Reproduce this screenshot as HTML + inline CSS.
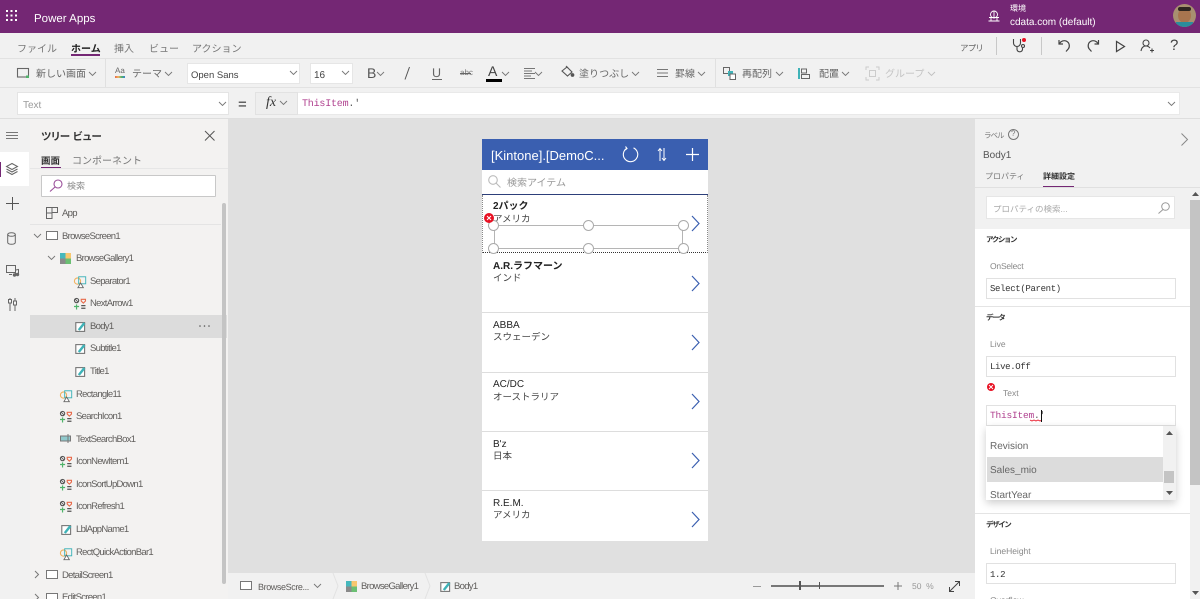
<!DOCTYPE html>
<html><head><meta charset="utf-8">
<style>
html,body{margin:0;padding:0;width:1200px;height:599px;overflow:hidden;background:#e0e0e0}
body{position:relative;font-family:"Liberation Sans","Noto Sans CJK JP",sans-serif;color:#555;text-rendering:geometricPrecision}
div{position:absolute;box-sizing:border-box}
.t{white-space:nowrap;line-height:20px;height:20px;font-size:10px;color:#605e5c;margin-top:1px}
.tr{font-size:9.500px;letter-spacing:-.7px}
.m{font-family:"Liberation Mono","Noto Sans CJK JP",monospace;font-size:9px;letter-spacing:-.34px}
.f{font-family:"Liberation Mono","Noto Sans CJK JP",monospace;font-size:10px;letter-spacing:-.2px}
.sec{font-size:7.500px;letter-spacing:-1.400px;color:#333;font-weight:bold}
svg{position:absolute;overflow:visible}
.b{background:#fff;border:1px solid #e1e1e1}
.h{width:11px;height:11px;border-radius:50%;background:#fff;border:1px solid #aaa}
.sep{height:1px;background:#e4e4e4}
</style></head><body>
<svg width="0" height="0" style="position:absolute"><defs>
<g id="lab" transform="scale(.8)"><rect x="1" y="2" width="11" height="11" fill="#fff" stroke="#777" stroke-width="1.400"/><path d="M3.500 10.500L10.500 1.500l2.500 2L6 12z" fill="#3fb3b8"/></g>
<g id="ico" transform="scale(.85)"><circle cx="3" cy="3" r="2.500" fill="none" stroke="#555" stroke-width="1.300"/><path d="M1.500 1.500l3 3" stroke="#555"/><path d="M8.500 1.500h5v2l-2.500 2.500-2.500-2.500z" fill="none" stroke="#e8694a" stroke-width="1.300"/><path d="M0 10h6M3 7.500v6" stroke="#4fb36a" stroke-width="1.400"/><path d="M8.500 9h5M8.500 12h5" stroke="#555" stroke-width="1.500"/></g>
<g id="shp" transform="scale(.78)"><circle cx="4.500" cy="6.500" r="4" fill="none" stroke="#f0b260" stroke-width="1.400"/><rect x="6" y="1" width="9" height="9" fill="none" stroke="#3fb3b8" stroke-width="1.200"/><path d="M5 15l3.500-6 3.500 6z" fill="#fff" stroke="#666" stroke-width="1.100"/></g>
<g id="scr"><rect x=".5" y=".5" width="11" height="8" fill="#fff" stroke="#777" stroke-width="1"/></g>
<g id="gal"><rect x="0" y="0" width="5.500" height="5.500" fill="#45b8bd"/><rect x="5.500" y="0" width="5.500" height="5.500" fill="#f8c76f"/><rect x="0" y="5.500" width="5.500" height="5.500" fill="#8a8a8a"/><rect x="5.500" y="5.500" width="5.500" height="5.500" fill="#6bbf73"/></g>
<path id="chev" d="M0 0l3.500 3.500L7 0" fill="none" stroke="#777" stroke-width=".9"/>
<path id="arr" d="M0 0l7 7.500-7 7.500" fill="none" stroke="#3a5fb0" stroke-width="1.200"/>
</defs></svg>

<!-- top bar -->
<div style="left:0;top:0;width:1200px;height:33px;background:#742774"></div>
<svg style="left:6px;top:10px" width="12" height="12" fill="#fff"><rect width="2" height="2"/><rect x="4.500" width="2" height="2"/><rect x="9" width="2" height="2"/><rect y="4.500" width="2" height="2"/><rect x="4.500" y="4.500" width="2" height="2"/><rect x="9" y="4.500" width="2" height="2"/><rect y="9" width="2" height="2"/><rect x="4.500" y="9" width="2" height="2"/><rect x="9" y="9" width="2" height="2"/></svg>
<div class="t" style="left:34px;top:8px;color:#fff;font-size:11.500px">Power Apps</div>
<svg style="left:988px;top:10px" width="12" height="12" fill="none" stroke="#fff" stroke-width=".9"><circle cx="6" cy="4.500" r="3.500"/><path d="M1 7.500h10M0.500 11h11M3 8v3M9 8v3M6 1v6"/></svg>
<div class="t" style="left:1010px;top:-2px;color:#fff;font-size:8px">環境</div>
<div class="t" style="left:1010px;top:12px;color:#fff;font-size:10px">cdata.com (default)</div>
<div style="left:1173px;top:4px;width:23px;height:23px;border-radius:50%;background:#a89070;overflow:hidden"><div style="left:5px;top:4px;width:13px;height:15px;border-radius:50%;background:#a8754f"></div><div style="left:5px;top:3px;width:13px;height:4px;border-radius:6px;background:#2e2620"></div><div style="left:3px;top:18px;width:17px;height:6px;background:#2b8e9c"></div></div>

<!-- menu row -->
<div style="left:0;top:33px;width:1200px;height:26px;background:#f1f1f1;border-bottom:1px solid #e2e2e2"></div>
<div class="t" style="left:17px;top:39px;color:#777">ファイル</div>
<div class="t" style="left:71px;top:39px;color:#222;font-weight:bold">ホーム</div>
<div style="left:71px;top:54px;width:29px;height:2px;background:#742774"></div>
<div class="t" style="left:114px;top:39px;color:#777">挿入</div>
<div class="t" style="left:149px;top:39px;color:#777">ビュー</div>
<div class="t" style="left:192px;top:39px;color:#777">アクション</div>
<div class="t" style="left:960px;top:37px;font-size:8.500px;letter-spacing:-.8px;color:#666">アプリ</div>
<div style="left:996px;top:37px;width:1px;height:18px;background:#c8c8c8"></div>
<div style="left:1041px;top:37px;width:1px;height:18px;background:#c8c8c8"></div>
<svg style="left:1012px;top:38px" width="16" height="16" fill="none" stroke="#444" stroke-width="1.100"><path d="M1.500 1v4a3.500 3.500 0 0 0 7 0V1M5 9v2.500a2.800 2.800 0 0 0 5.500 0V10"/><circle cx="11" cy="8" r="1.500"/><circle cx="12" cy="2" r="2" fill="#e81123" stroke="none"/></svg>
<svg style="left:1058px;top:38px" width="14" height="15" fill="none" stroke="#444" stroke-width="1.200"><path d="M1 2v4h4M1.500 5.500C3 3 6 2 8.500 3.200c3 1.500 3.500 5 2 7.500L8 13.500"/></svg>
<svg style="left:1086px;top:38px" width="14" height="15" fill="none" stroke="#444" stroke-width="1.200"><path d="M12.500 2v4h-4M12 5.500C10.500 3 7.500 2 5 3.200c-3 1.500-3.500 5-2 7.500l2.500 2.800"/></svg>
<svg style="left:1115px;top:40px" width="12" height="13" fill="none" stroke="#444" stroke-width="1.200"><path d="M1.500 1.500v10l8-5z"/></svg>
<svg style="left:1140px;top:39px" width="15" height="14" fill="none" stroke="#444" stroke-width="1.100"><circle cx="6" cy="4" r="3"/><path d="M1 12c.5-3 2-5 5-5 2 0 3 .8 4 2M10 11.500h4M12 9.500v4"/></svg>
<div class="t" style="left:1170px;top:35px;font-size:15px;color:#444">?</div>

<!-- toolbar -->
<div style="left:0;top:59px;width:1200px;height:29px;background:#f1f1f1;border-bottom:1px solid #e2e2e2"></div>
<div style="left:105px;top:59px;width:1px;height:28px;background:#e0e0e0"></div>
<div style="left:715px;top:59px;width:1px;height:28px;background:#e0e0e0"></div>
<svg style="left:17px;top:68px" width="13" height="11" fill="none"><rect x=".5" y=".5" width="11" height="8.500" stroke="#666" stroke-width="1.100"/><rect x="9" y="7.500" width="3" height="2.500" fill="#4fb36a"/></svg>
<div class="t" style="left:36px;top:64px;color:#666">新しい画面</div>
<svg style="left:89px;top:72px" width="8" height="5"><use href="#chev"/></svg>
<div class="t" style="left:115px;top:60px;font-size:8px;color:#666">Aa</div>
<div style="left:115px;top:76px;width:10px;height:2px;background:linear-gradient(90deg,#e8694a,#f0b260,#4fb36a,#3a7fd0)"></div>
<div class="t" style="left:132px;top:64px;color:#666">テーマ</div>
<svg style="left:165px;top:72px" width="8" height="5"><use href="#chev"/></svg>
<div style="left:187px;top:63px;width:113px;height:21px;background:#fff;border:1px solid #e6e6e6"></div>
<div class="t" style="left:191px;top:65px;font-size:9.500px;color:#444">Open Sans</div>
<svg style="left:290px;top:71px" width="8" height="5"><use href="#chev"/></svg>
<div style="left:310px;top:63px;width:43px;height:21px;background:#fff;border:1px solid #e6e6e6"></div>
<div class="t" style="left:314px;top:65px;font-size:10px;color:#444">16</div>
<svg style="left:342px;top:71px" width="8" height="5"><use href="#chev"/></svg>
<div class="t" style="left:367px;top:62px;font-size:14px;color:#555">B</div>
<svg style="left:377px;top:72px" width="8" height="5"><use href="#chev"/></svg>
<svg style="left:404px;top:67px" width="7" height="13" stroke="#555" stroke-width="1"><path d="M5.500 0L1 12.500"/></svg>
<div class="t" style="left:432px;top:62px;font-size:12.500px;color:#666">U</div>
<div style="left:432px;top:79px;width:10px;height:1px;background:#666"></div>
<div class="t" style="left:460px;top:62px;font-size:8px;color:#777">abc</div>
<div style="left:460px;top:73px;width:11px;height:1px;background:#666"></div>
<div class="t" style="left:488px;top:60px;font-size:14px;color:#444">A</div>
<div style="left:486px;top:79px;width:16px;height:3px;background:#000"></div>
<svg style="left:502px;top:72px" width="8" height="5"><use href="#chev"/></svg>
<svg style="left:524px;top:68px" width="12" height="11" stroke="#777" stroke-width="1"><path d="M0 .5h11M0 3h8M0 5.500h11M0 8h7M0 10.500h11"/></svg>
<svg style="left:535px;top:72px" width="8" height="5"><use href="#chev"/></svg>
<svg style="left:561px;top:65px" width="13" height="13" fill="none" stroke="#555" stroke-width="1.100"><path d="M1 6l5-4 5 5-4.500 4z"/><path d="M5 1l2 2" /><circle cx="11.500" cy="10" r="1.300" fill="#555"/></svg>
<div class="t" style="left:579px;top:64px;color:#666">塗りつぶし</div>
<svg style="left:632px;top:72px" width="8" height="5"><use href="#chev"/></svg>
<svg style="left:657px;top:69px" width="11" height="9" stroke="#777" stroke-width="1"><path d="M0 .5h11M0 4h11M0 7.500h11"/></svg>
<div class="t" style="left:675px;top:64px;color:#666">罫線</div>
<svg style="left:698px;top:72px" width="8" height="5"><use href="#chev"/></svg>
<svg style="left:723px;top:67px" width="13" height="13" fill="none"><rect x=".5" y=".5" width="6" height="6" stroke="#666"/><rect x="5" y="4" width="5" height="5" fill="#3fb3b8"/><rect x="7" y="7" width="5.500" height="5.500" fill="#fff" stroke="#666"/></svg>
<div class="t" style="left:742px;top:64px;color:#666">再配列</div>
<svg style="left:776px;top:72px" width="8" height="5"><use href="#chev"/></svg>
<svg style="left:798px;top:67px" width="13" height="13" fill="none"><rect x="0" y="1" width="2" height="11" fill="#3fb3b8"/><rect x="3.500" y="2" width="5" height="4" stroke="#666"/><rect x="3.500" y="7.500" width="8" height="4" stroke="#666"/></svg>
<div class="t" style="left:819px;top:64px;color:#666">配置</div>
<svg style="left:842px;top:72px" width="8" height="5"><use href="#chev"/></svg>
<svg style="left:866px;top:67px" width="13" height="13" fill="none" stroke="#ccc" stroke-width="1"><path d="M0 3V0h3M10 0h3v3M13 10v3h-3M3 13H0v-3"/><rect x="3.500" y="3.500" width="6" height="6"/></svg>
<div class="t" style="left:885px;top:64px;color:#c4c4c4">グループ</div>
<svg style="left:928px;top:72px" width="8" height="5"><use href="#chev" style="opacity:.4"/></svg>

<!-- formula row -->
<div style="left:0;top:88px;width:1200px;height:31px;background:#f1f1f1;border-bottom:1px solid #dedede"></div>
<div style="left:17px;top:92px;width:212px;height:23px;background:#fff;border:1px solid #e4e4e4"></div>
<div class="t" style="left:23px;top:95px;font-size:10px;color:#999">Text</div>
<svg style="left:219px;top:102px" width="8" height="5"><use href="#chev"/></svg>
<div class="t" style="left:238px;top:94px;font-size:15px;color:#333">=</div>
<div style="left:255px;top:92px;width:43px;height:23px;background:#eee;border:1px solid #e2e2e2"></div>
<div class="t" style="left:266px;top:92px;font-size:14px;color:#333;font-family:'Liberation Serif',serif;font-style:italic">fx</div>
<svg style="left:280px;top:101px" width="8" height="5"><use href="#chev"/></svg>
<div style="left:298px;top:92px;width:882px;height:23px;background:#fff;border:1px solid #e9e9e9;border-left:0"></div>
<div class="t f" style="left:302px;top:94px;color:#b0418f">ThisItem<span style="color:#555">.'</span></div>
<svg style="left:1168px;top:102px" width="8" height="5"><use href="#chev"/></svg>

<!-- left rail -->
<div style="left:0;top:119px;width:30px;height:480px;background:#f1f1f1"></div>
<svg style="left:6px;top:132px" width="12" height="8" stroke="#777" stroke-width="1"><path d="M0 .5h12M0 3.500h12M0 6.500h12"/></svg>
<div style="left:0;top:152px;width:29px;height:34px;background:#fff"></div>
<div style="left:0;top:162px;width:1px;height:15px;background:#742774"></div>
<svg style="left:6px;top:163px" width="12" height="13" fill="none" stroke="#666" stroke-width="1"><path d="M6 .5l5.500 3L6 6.500.5 3.500zM.5 6L6 9l5.500-3M.5 8.500l5.500 3 5.500-3"/></svg>
<svg style="left:6px;top:197px" width="13" height="13" stroke="#555" stroke-width="1"><path d="M6.500 0v13M0 6.500h13"/></svg>
<svg style="left:7px;top:232px" width="10" height="13" fill="none" stroke="#666" stroke-width="1"><ellipse cx="4.500" cy="2.500" rx="3.800" ry="1.800"/><path d="M.7 2.500v8c0 1 1.700 1.800 3.800 1.800s3.800-.8 3.800-1.800v-8"/></svg>
<svg style="left:6px;top:265px" width="13" height="12" fill="none" stroke="#666" stroke-width="1"><rect x=".5" y=".5" width="9" height="7"/><path d="M3 9.500h3"/><circle cx="8.500" cy="10" r="1.200" fill="#666"/><circle cx="11.500" cy="9.500" r="1.200" fill="#666"/><path d="M9.500 10V5l3-.5v5"/></svg>
<svg style="left:8px;top:298px" width="9" height="14" fill="none" stroke="#666" stroke-width="1"><path d="M2 5v8M7 0v3M7 7v6M2 0v1.500"/><rect x=".5" y="1.500" width="3" height="3.500"/><rect x="5.500" y="3" width="3" height="4"/></svg>

<!-- tree panel -->
<div style="left:30px;top:119px;width:198px;height:480px;background:#f3f2f1"></div>
<div class="t" style="left:41px;top:126px;font-size:10.500px;letter-spacing:-1.100px;word-spacing:1.500px;color:#333;font-weight:bold">ツリー ビュー</div>
<svg style="left:205px;top:131px" width="10" height="10" stroke="#555" stroke-width="1"><path d="M0 0l9.500 9.500M9.500 0L0 9.500"/></svg>
<div class="t" style="left:41px;top:151px;font-size:9.500px;color:#333;font-weight:bold">画面</div>
<div class="t" style="left:72px;top:151px;font-size:10px;color:#777">コンポーネント</div>
<div style="left:41px;top:167px;width:20px;height:2px;background:#742774"></div>
<div style="left:30px;top:168px;width:198px;height:1px;background:#e6e6e6"></div>
<div style="left:41px;top:175px;width:175px;height:22px;background:#fff;border:1px solid #c8c8c8;border-radius:1px"></div>
<svg style="left:50px;top:179px" width="13" height="13" fill="none" stroke="#9a4f9a" stroke-width="1.100"><circle cx="8" cy="5" r="4"/><path d="M5 8l-5 4.500"/></svg>
<div class="t" style="left:67px;top:175px;font-size:9px;color:#888">検索</div>
<svg style="left:46px;top:207px" width="12" height="12" fill="none" stroke="#666" stroke-width="1"><path d="M.5.500h5.500v5.500H.5zM6 .5h5.500v5H6zM.5 6H6v5.500H.5z"/></svg>
<div class="t tr" style="left:62px;top:203px">App</div>
<div style="left:30px;top:224px;width:191px;height:1px;background:#e4e4e4"></div>

<svg style="left:34px;top:234px" width="8" height="5"><use href="#chev"/></svg>
<svg style="left:46px;top:231px" width="12" height="10"><use href="#scr"/></svg>
<div class="t tr" style="left:62px;top:226px">BrowseScreen1</div>
<svg style="left:48px;top:256px" width="8" height="5"><use href="#chev"/></svg>
<svg style="left:60px;top:253px" width="11" height="11"><use href="#gal"/></svg>
<div class="t tr" style="left:76px;top:248px">BrowseGallery1</div>
<svg style="left:74px;top:276px" width="12" height="12"><use href="#shp"/></svg>
<div class="t tr" style="left:90px;top:271px">Separator1</div>
<svg style="left:74px;top:298px" width="12" height="12"><use href="#ico"/></svg>
<div class="t tr" style="left:90px;top:293px">NextArrow1</div>
<div style="left:30px;top:315px;width:197px;height:23px;background:#dcdcdc"></div>
<svg style="left:75px;top:321px" width="11" height="11"><use href="#lab"/></svg>
<div class="t tr" style="left:90px;top:316px">Body1</div>
<svg style="left:199px;top:325px" width="12" height="2" fill="#555"><circle cx="1" cy="1" r=".8"/><circle cx="5.500" cy="1" r=".8"/><circle cx="10" cy="1" r=".8"/></svg>
<svg style="left:75px;top:343px" width="11" height="11"><use href="#lab"/></svg>
<div class="t tr" style="left:90px;top:338px">Subtitle1</div>
<svg style="left:75px;top:366px" width="11" height="11"><use href="#lab"/></svg>
<div class="t tr" style="left:90px;top:361px">Title1</div>
<svg style="left:60px;top:390px" width="12" height="12"><use href="#shp"/></svg>
<div class="t tr" style="left:76px;top:384px">Rectangle11</div>
<svg style="left:60px;top:411px" width="12" height="12"><use href="#ico"/></svg>
<div class="t tr" style="left:76px;top:406px">SearchIcon1</div>
<svg style="left:60px;top:434px" width="12" height="10" fill="none" stroke="#777"><rect x=".5" y="2" width="10" height="5" fill="#8fc9cc"/><path d="M8 0v9"/></svg>
<div class="t tr" style="left:76px;top:429px">TextSearchBox1</div>
<svg style="left:60px;top:456px" width="12" height="12"><use href="#ico"/></svg>
<div class="t tr" style="left:76px;top:451px">IconNewItem1</div>
<svg style="left:60px;top:479px" width="12" height="12"><use href="#ico"/></svg>
<div class="t tr" style="left:76px;top:474px">IconSortUpDown1</div>
<svg style="left:60px;top:501px" width="12" height="12"><use href="#ico"/></svg>
<div class="t tr" style="left:76px;top:496px">IconRefresh1</div>
<svg style="left:61px;top:524px" width="11" height="11"><use href="#lab"/></svg>
<div class="t tr" style="left:76px;top:519px">LblAppName1</div>
<svg style="left:60px;top:548px" width="12" height="12"><use href="#shp"/></svg>
<div class="t tr" style="left:76px;top:542px">RectQuickActionBar1</div>
<svg style="left:35px;top:571px" width="5" height="8"><path d="M0 0l3.500 3.500L0 7" fill="none" stroke="#777"/></svg>
<svg style="left:46px;top:570px" width="12" height="10"><use href="#scr"/></svg>
<div class="t tr" style="left:62px;top:565px">DetailScreen1</div>
<svg style="left:35px;top:594px" width="5" height="8"><path d="M0 0l3.500 3.500L0 7" fill="none" stroke="#777"/></svg>
<svg style="left:46px;top:593px" width="12" height="10"><use href="#scr"/></svg>
<div class="t tr" style="left:62px;top:587px">EditScreen1</div>
<div style="left:222px;top:203px;width:4px;height:381px;background:#c4c4c4;border-radius:2px"></div>

<!-- canvas -->
<div style="left:228px;top:119px;width:747px;height:454px;background:#e0e0e0"></div>
<div style="left:482px;top:139px;width:226px;height:402px;background:#fff"></div>
<div style="left:482px;top:139px;width:226px;height:31px;background:#3a5fb0"></div>
<div class="t" style="left:491px;top:145px;color:#fff;font-size:13px">[Kintone].[DemoC...</div>
<svg style="left:622px;top:146px" width="17" height="17" fill="none" stroke="#fff" stroke-width="1.100"><path d="M5 2.200a7.200 7.200 0 1 0 6.500-.3M3.500 .5L5 2.500l-2 1.500" /></svg>
<svg style="left:657px;top:148px" width="10" height="13" fill="none" stroke="#fff" stroke-width="1"><path d="M3 13V1M1 3l2-2.500L5 3M7 0v12M5 10l2 2.500L9 10"/></svg>
<svg style="left:686px;top:148px" width="13" height="13" stroke="#fff" stroke-width="1.200"><path d="M6.500 0v13M0 6.500h13"/></svg>
<svg style="left:488px;top:175px" width="13" height="13" fill="none" stroke="#bbb" stroke-width="1.100"><circle cx="5" cy="5" r="4.300"/><path d="M8 8l4.500 4.500"/></svg>
<div class="t" style="left:507px;top:173px;font-size:10px;color:#999">検索アイテム</div>
<div style="left:482px;top:194px;width:226px;height:1px;background:#2d3f7a"></div>
<div style="left:482px;top:195px;width:226px;height:58px;border-left:1px dotted #888;border-right:1px dotted #888;border-bottom:1px dotted #333"></div>

<div class="t" style="left:493px;top:196px;font-size:10px;font-weight:bold;color:#222">2パック</div>
<div class="t" style="left:493px;top:209px;font-size:9.500px;color:#444">アメリカ</div>
<svg style="left:692px;top:216px" width="9" height="16"><use href="#arr"/></svg>
<div style="left:494px;top:225px;width:189px;height:24px;border:1px solid #b5b5b5"></div>
<div class="h" style="left:488px;top:220px"></div><div class="h" style="left:583px;top:220px"></div><div class="h" style="left:678px;top:220px"></div>
<div class="h" style="left:488px;top:243px"></div><div class="h" style="left:583px;top:243px"></div><div class="h" style="left:678px;top:243px"></div>
<div style="left:484px;top:213px;width:10px;height:10px;border-radius:50%;background:#e81123"></div>
<svg style="left:487px;top:216px" width="4" height="4" stroke="#fff" stroke-width="1"><path d="M0 0l4 4M4 0L0 4"/></svg>

<div class="t" style="left:493px;top:256px;font-size:10px;font-weight:bold;color:#222">A.R.ラフマーン</div>
<div class="t" style="left:493px;top:268px;font-size:9.500px;color:#444">インド</div>
<svg style="left:692px;top:276px" width="9" height="16"><use href="#arr"/></svg>
<div style="left:482px;top:312px;width:226px;height:1px;background:#ddd"></div>
<div class="t" style="left:493px;top:315px;font-size:10px;color:#222">ABBA</div>
<div class="t" style="left:493px;top:327px;font-size:9.500px;color:#444">スウェーデン</div>
<svg style="left:692px;top:335px" width="9" height="16"><use href="#arr"/></svg>
<div style="left:482px;top:372px;width:226px;height:1px;background:#ddd"></div>
<div class="t" style="left:493px;top:374px;font-size:10px;color:#222">AC/DC</div>
<div class="t" style="left:493px;top:387px;font-size:9.500px;color:#444">オーストラリア</div>
<svg style="left:692px;top:394px" width="9" height="16"><use href="#arr"/></svg>
<div style="left:482px;top:431px;width:226px;height:1px;background:#ddd"></div>
<div class="t" style="left:493px;top:434px;font-size:10px;color:#222">B'z</div>
<div class="t" style="left:493px;top:446px;font-size:9.500px;color:#444">日本</div>
<svg style="left:692px;top:453px" width="9" height="16"><use href="#arr"/></svg>
<div style="left:482px;top:490px;width:226px;height:1px;background:#ddd"></div>
<div class="t" style="left:493px;top:493px;font-size:10px;color:#222">R.E.M.</div>
<div class="t" style="left:493px;top:505px;font-size:9.500px;color:#444">アメリカ</div>
<svg style="left:692px;top:512px" width="9" height="16"><use href="#arr"/></svg>

<!-- bottom bar -->
<div style="left:228px;top:573px;width:747px;height:26px;background:#f1f1f1"></div>
<svg style="left:240px;top:581px" width="12" height="10"><use href="#scr"/></svg>
<div class="t" style="left:258px;top:576px;font-size:9px;letter-spacing:-.4px">BrowseScre...</div>
<svg style="left:314px;top:584px" width="8" height="5"><use href="#chev"/></svg>
<svg style="left:333px;top:573px" width="6" height="26" fill="none" stroke="#e2e2e2"><path d="M0 0l5 13-5 13"/></svg>
<svg style="left:346px;top:581px" width="11" height="11"><use href="#gal"/></svg>
<div class="t tr" style="left:361px;top:576px">BrowseGallery1</div>
<svg style="left:425px;top:573px" width="6" height="26" fill="none" stroke="#e2e2e2"><path d="M0 0l5 13-5 13"/></svg>
<svg style="left:440px;top:581px" width="11" height="11"><use href="#lab"/></svg>
<div class="t tr" style="left:454px;top:576px">Body1</div>
<div style="left:753px;top:586px;width:8px;height:1px;background:#999"></div>
<div style="left:771px;top:585px;width:113px;height:2px;background:#777"></div>
<div style="left:799px;top:581px;width:2px;height:9px;background:#555"></div>
<div style="left:819px;top:582px;width:1px;height:7px;background:#555"></div>
<svg style="left:894px;top:582px" width="8" height="8" stroke="#777"><path d="M4 0v8M0 4h8"/></svg>
<div class="t" style="left:912px;top:575px;font-size:8.500px;color:#999">50&nbsp; %</div>
<svg style="left:949px;top:581px" width="11" height="11" fill="none" stroke="#444" stroke-width="1"><path d="M.5 10.500l10-10M6 .5h4.500V5M.5 6v4.500H5"/></svg>

<!-- right panel -->
<div style="left:975px;top:119px;width:225px;height:480px;background:#f1f1f1"></div>
<div class="t" style="left:984px;top:125px;font-size:7.500px;letter-spacing:-1px;color:#777">ラベル</div>
<svg style="left:1008px;top:129px" width="11" height="11" fill="none" stroke="#777"><circle cx="5.500" cy="5.500" r="5"/></svg>
<div class="t" style="left:1011px;top:123px;font-size:8px;color:#777">?</div>
<svg style="left:1181px;top:133px" width="7" height="13" fill="none" stroke="#888"><path d="M.5.500l6 6-6 6"/></svg>
<div class="t" style="left:983px;top:145px;font-size:10px;color:#555">Body1</div>
<div class="t" style="left:985px;top:166px;font-size:8px;color:#777">プロパティ</div>
<div class="t" style="left:1043px;top:166px;font-size:8px;color:#333;font-weight:bold">詳細設定</div>
<div style="left:1043px;top:186px;width:31px;height:2px;background:#742774"></div>
<div style="left:975px;top:187px;width:225px;height:1px;background:#e0e0e0"></div>

<div style="left:975px;top:188px;width:215px;height:41px;background:#f1f1f1"></div>
<div style="left:975px;top:229px;width:215px;height:370px;background:#fff"></div>
<div style="left:986px;top:196px;width:189px;height:23px;background:#fff;border:1px solid #e6e6e6"></div>
<div class="t" style="left:993px;top:198px;font-size:8.500px;color:#aaa">プロパティの検索...</div>
<svg style="left:1158px;top:202px" width="12" height="12" fill="none" stroke="#999"><circle cx="7.500" cy="4.500" r="3.800"/><path d="M5 7.500L.5 11.500"/></svg>
<div class="t sec" style="left:986px;top:229px">アクション</div>
<div class="t" style="left:990px;top:255px;font-size:8.500px;letter-spacing:-.2px;color:#888">OnSelect</div>
<div class="b" style="left:986px;top:278px;width:190px;height:21px"></div>
<div class="t m" style="left:990px;top:278px;color:#333">Select(Parent)</div>
<div class="sep" style="left:975px;top:306px;width:215px"></div>
<div class="t sec" style="left:986px;top:307px">データ</div>
<div class="t" style="left:990px;top:333px;font-size:8.500px;color:#888">Live</div>
<div class="b" style="left:986px;top:356px;width:190px;height:21px"></div>
<div class="t m" style="left:990px;top:356px;color:#333">Live.Off</div>
<div style="left:987px;top:383px;width:8px;height:8px;border-radius:50%;background:#e81123"></div>
<svg style="left:989px;top:385px" width="4" height="4" stroke="#fff" stroke-width=".9"><path d="M0 0l4 4M4 0L0 4"/></svg>
<div class="t" style="left:1003px;top:382px;font-size:8.500px;color:#888">Text</div>
<div class="b" style="left:986px;top:405px;width:190px;height:21px"></div>
<div class="t m" style="left:990px;top:405px;color:#b0418f;font-size:9.500px;letter-spacing:-.2px">ThisItem<span style="color:#555">.'</span></div>
<svg style="left:1030px;top:419px" width="12" height="3" fill="none" stroke="#e81123" stroke-width=".8"><path d="M0 1l2 1 2-1 2 1 2-1 2 1 2-1"/></svg>
<div style="left:1041px;top:410px;width:1px;height:12px;background:#111"></div>

<div style="left:986px;top:426px;width:190px;height:74px;background:#fff;box-shadow:0 3px 8px rgba(0,0,0,.2)"></div>
<div style="left:1163px;top:426px;width:13px;height:74px;background:#f1f1f1"></div>
<svg style="left:1166px;top:431px" width="7" height="4" fill="#555"><path d="M0 4l3.500-4 3.500 4z"/></svg>
<svg style="left:1166px;top:491px" width="7" height="4" fill="#555"><path d="M0 0l3.500 4 3.500-4z"/></svg>
<div style="left:1164px;top:471px;width:10px;height:12px;background:#c4c4c4"></div>
<div style="left:987px;top:457px;width:176px;height:25px;background:#dcdcdc"></div>
<div class="t" style="left:990px;top:436px;font-size:10px;color:#666">Revision</div>
<div class="t" style="left:990px;top:460px;font-size:10px;color:#666">Sales_mio</div>
<div style="left:986px;top:482px;width:177px;height:18px;overflow:hidden"><div class="t" style="left:4px;top:3px;font-size:10px;color:#666">StartYear</div></div>

<div class="sep" style="left:975px;top:513px;width:215px"></div>
<div class="t sec" style="left:986px;top:514px">デザイン</div>
<div class="t" style="left:990px;top:540px;font-size:8.500px;color:#888">LineHeight</div>
<div class="b" style="left:986px;top:563px;width:190px;height:21px"></div>
<div class="t m" style="left:990px;top:564px;color:#333">1.2</div>
<div class="t" style="left:990px;top:589px;font-size:8.500px;color:#888">Overflow</div>

<div style="left:1190px;top:188px;width:10px;height:411px;background:#f1f1f1"></div>
<svg style="left:1192px;top:192px" width="7" height="4" fill="#555"><path d="M0 4l3.500-4 3.500 4z"/></svg>
<div style="left:1190px;top:200px;width:10px;height:285px;background:#c4c4c4"></div>
<svg style="left:1192px;top:591px" width="7" height="4" fill="#555"><path d="M0 0l3.500 4 3.500-4z"/></svg>
</body></html>
